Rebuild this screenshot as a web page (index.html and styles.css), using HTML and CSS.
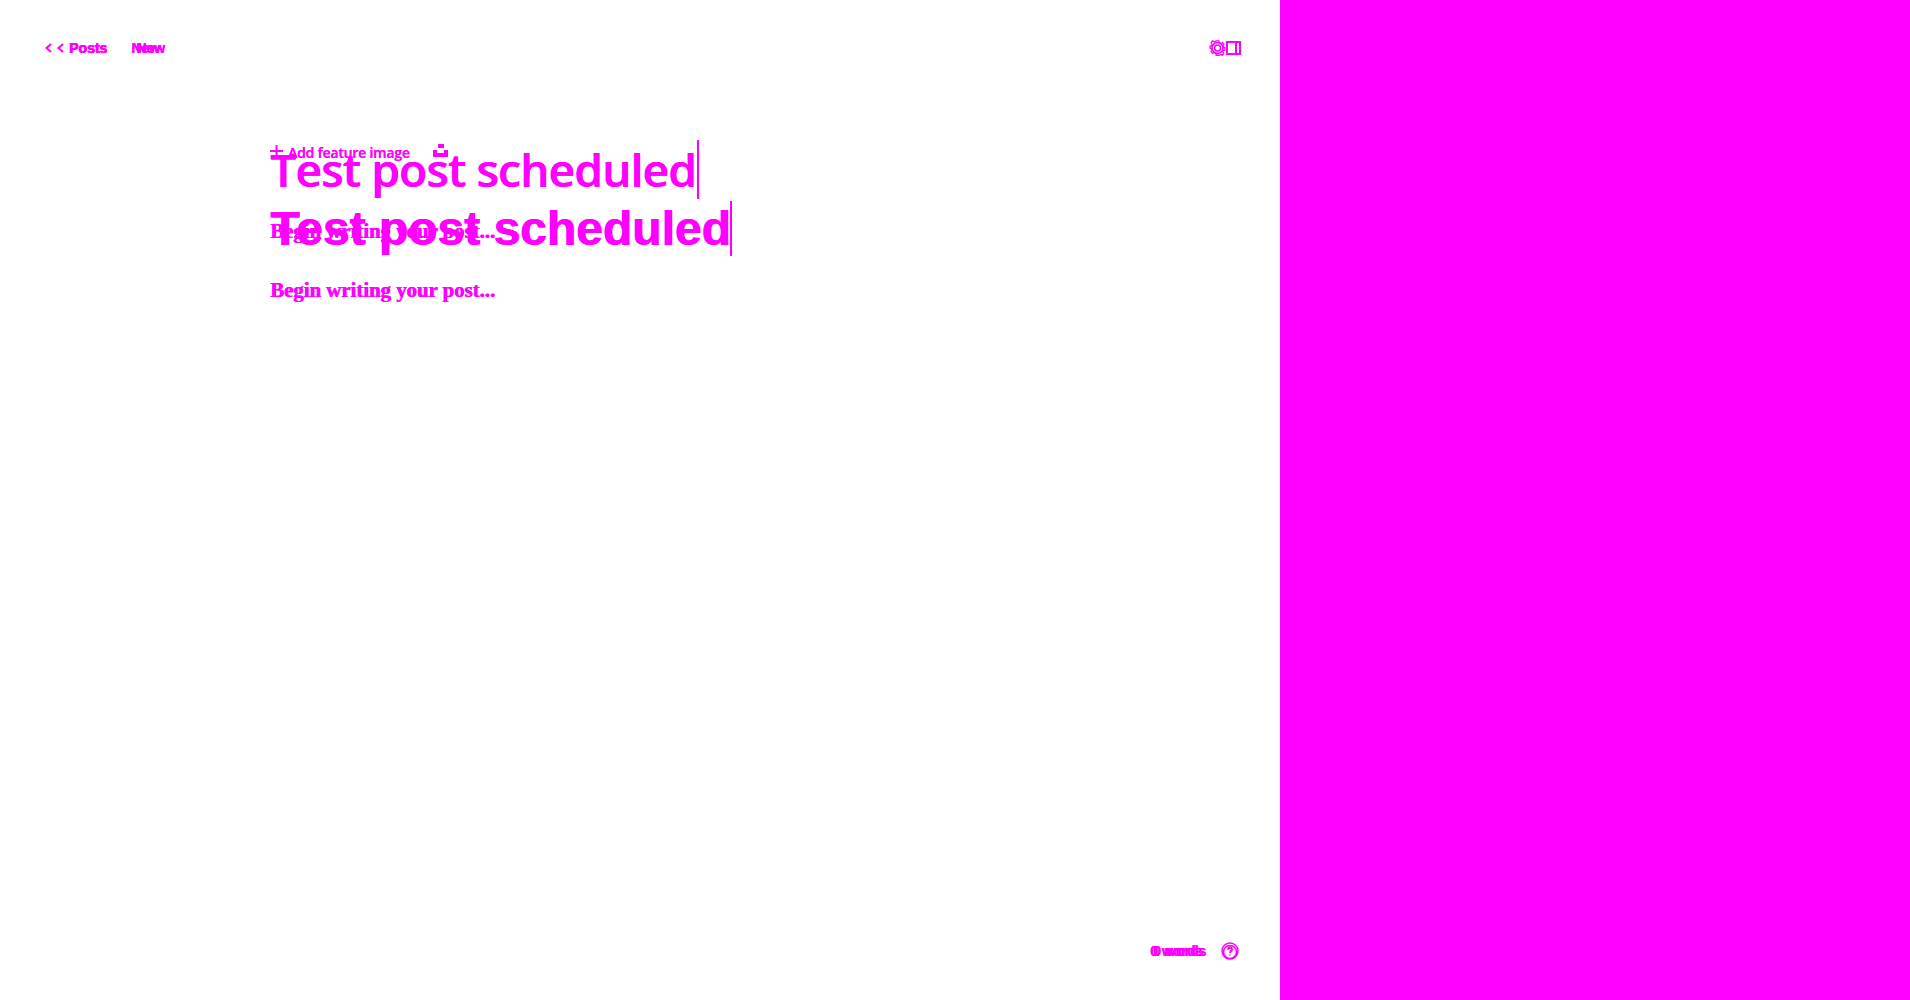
FILE: index.html
```html
<!DOCTYPE html>
<html lang="en">
<head>
<meta charset="utf-8">
<title>Test post scheduled</title>
<link rel="stylesheet" href="styles.css">
</head>
<body>
<div class="page">
  <main class="editor">
    <section class="layer layer-a">
      <header class="bar">
        <nav class="crumbs">
          <svg class="chev" width="7" height="10" viewBox="0 0 7 10"><path d="M6 1 1.5 5 6 9"/></svg>
          <span class="crumb">Posts</span>
          <span class="crumb new">New</span>
        </nav>
        <div class="tools">
          <svg class="gear" width="17" height="18" viewBox="0 0 17 18"><circle cx="8.5" cy="9" r="3"/><path d="M7 1h3l.5 2.2 1.7.8 2-1.1 1.6 2-1.2 1.9.4 1.2 2 .7v2.6l-2 .7-.4 1.2 1.2 1.9-1.6 2-2-1.1-1.7.8L10 17H7l-.5-2.2-1.7-.8-2 1.1-1.6-2 1.2-1.9-.4-1.2-2-.7V6.9l2-.7.4-1.2L1.2 3.1l1.6-2 2 1.1 1.7-.8z" transform="translate(1.1 .9) scale(.87 .9)"/></svg>
          <svg class="side" width="15" height="14" viewBox="0 0 15 14"><rect x="1" y="1" width="13" height="12"/><path d="M10 1v12"/></svg>
        </div>
      </header>
      <div class="body body-a">
        <div class="feature">
          <svg class="plus" width="13" height="12" viewBox="0 0 13 12"><path d="M0 6h13M6.5 0v12"/></svg>
          <span>Add feature image</span>
          <svg class="mark" width="15" height="13" viewBox="0 0 15 13"><path class="solid" d="M5 0h6v4H5zM0 6h4v3h7V6h4v7H0z"/></svg>
        </div>
        <h1 class="title title-a"><span>Test post scheduled</span><i class="caret"></i></h1>
        <p class="prompt">Begin writing your post...</p>
      </div>
      <footer class="foot"><span class="words">0 words</span>
        <svg class="help" width="18" height="18" viewBox="0 0 18 18"><circle cx="9" cy="9" r="8"/><path d="M7 7a2 2 0 1 1 3 1.7c-.7.4-1 .8-1 1.6M9 12.5v1.2"/></svg>
      </footer>
    </section>
    <section class="layer layer-b">
      <header class="bar">
        <nav class="crumbs">
          <svg class="chev" width="7" height="10" viewBox="0 0 7 10"><path d="M6 1 1.5 5 6 9"/></svg>
          <span class="crumb">Posts</span>
          <span class="crumb new">New</span>
        </nav>
        <div class="tools">
          <svg class="gear" width="17" height="18" viewBox="0 0 17 18"><circle cx="8.5" cy="9" r="5.5"/></svg>
          <svg class="side" width="15" height="14" viewBox="0 0 15 14"><rect x="1" y="1" width="13" height="12"/><path d="M10 1v12"/></svg>
        </div>
      </header>
      <div class="body body-b">
        <h1 class="title title-b"><span>Test post scheduled</span><i class="caret"></i></h1>
        <p class="prompt">Begin writing your post...</p>
      </div>
      <footer class="foot"><span class="words">0 words</span>
        <svg class="help" width="18" height="18" viewBox="0 0 18 18"><circle cx="9" cy="9" r="6.5"/><path d="M7 7a2 2 0 1 1 3 1.7c-.7.4-1 .8-1 1.6"/></svg>
      </footer>
    </section>
  </main>
  <aside class="panel"></aside>
</div>
</body>
</html>
```
FILE: styles.css
```css
html, body { margin: 0; height: 100%; background: #fff; }
.page { display: flex; height: 1000px; overflow: hidden; }
.editor { width: 1280px; display: grid; grid-template: 1fr / 1fr; }
.panel { flex: 1; background: #f0f; }
.layer { grid-area: 1 / 1; display: flex; flex-direction: column; color: #f0f; font-family: "Liberation Sans", sans-serif; min-width: 0; }
svg { fill: none; stroke: #f0f; stroke-width: 1.5; flex: none; }
.solid { fill: #f0f; stroke: none; }

.bar { display: flex; justify-content: space-between; align-items: center; height: 24px; padding-top: 36px; padding-right: 39px; }
.crumbs { display: flex; align-items: center; font-size: 14px; font-weight: 700; text-shadow: .5px 0 #f0f; }
.layer-a .bar { padding-left: 45px; }
.layer-b .bar { padding-left: 57px; }
.layer-a .chev { margin-right: 17px; }
.layer-b .chev { margin-right: 5px; }
.layer-a .crumb.new { margin-left: 24px; }
.layer-b .crumb.new { margin-left: 29px; }
.chev { stroke-width: 2; }
.tools { display: flex; align-items: center; gap: 0; }
.side { stroke-width: 2; }

.body { flex: 1; padding-left: 270px; }
.body-a { padding-top: 82px; }
.body-b { padding-top: 141px; }
.feature { display: flex; align-items: center; height: 20px; font-family: "Open Sans", sans-serif; font-size: 14px; font-weight: 600; letter-spacing: -.2px; text-shadow: .3px 0 #f0f; }
.plus { stroke-width: 2; margin-right: 5px; margin-top: -3px; }
.mark { margin-left: 23px; margin-top: -4px; }

.title { display: flex; margin: 0; color: #f0f; }
.title-a { font-family: "Open Sans", sans-serif; font-size: 46px; font-weight: 600; letter-spacing: -.8px; line-height: 59px; height: 59px; margin-top: -22px; align-items: flex-start; text-shadow: .7px 0 #f0f; }
.title-b { font-size: 48px; font-weight: 700; line-height: 55px; height: 55px; text-shadow: 1px 0 #f0f; }
.caret { width: 2px; background: #f0f; display: block; }
.title-a .caret { height: 59px; margin-left: 1px; }
.title-b .caret { height: 55px; margin-left: -1px; }

.prompt { font-family: "Liberation Serif", serif; font-weight: 700; font-size: 20.8px; line-height: 30px; text-shadow: .7px 0 #f0f; margin: 0; }
.body-a .prompt { margin-top: 17px; }
.body-b .prompt { margin-top: 19px; }

.foot { display: flex; justify-content: flex-end; align-items: center; height: 24px; margin-bottom: 37px; font-size: 14px; font-weight: 700; text-shadow: .5px 0 #f0f; padding-right: 41px; }
.layer-a .foot { gap: 18px; }
.layer-b .foot { gap: 15px; }
.layer-b .help { margin-top: 1px; }
```
